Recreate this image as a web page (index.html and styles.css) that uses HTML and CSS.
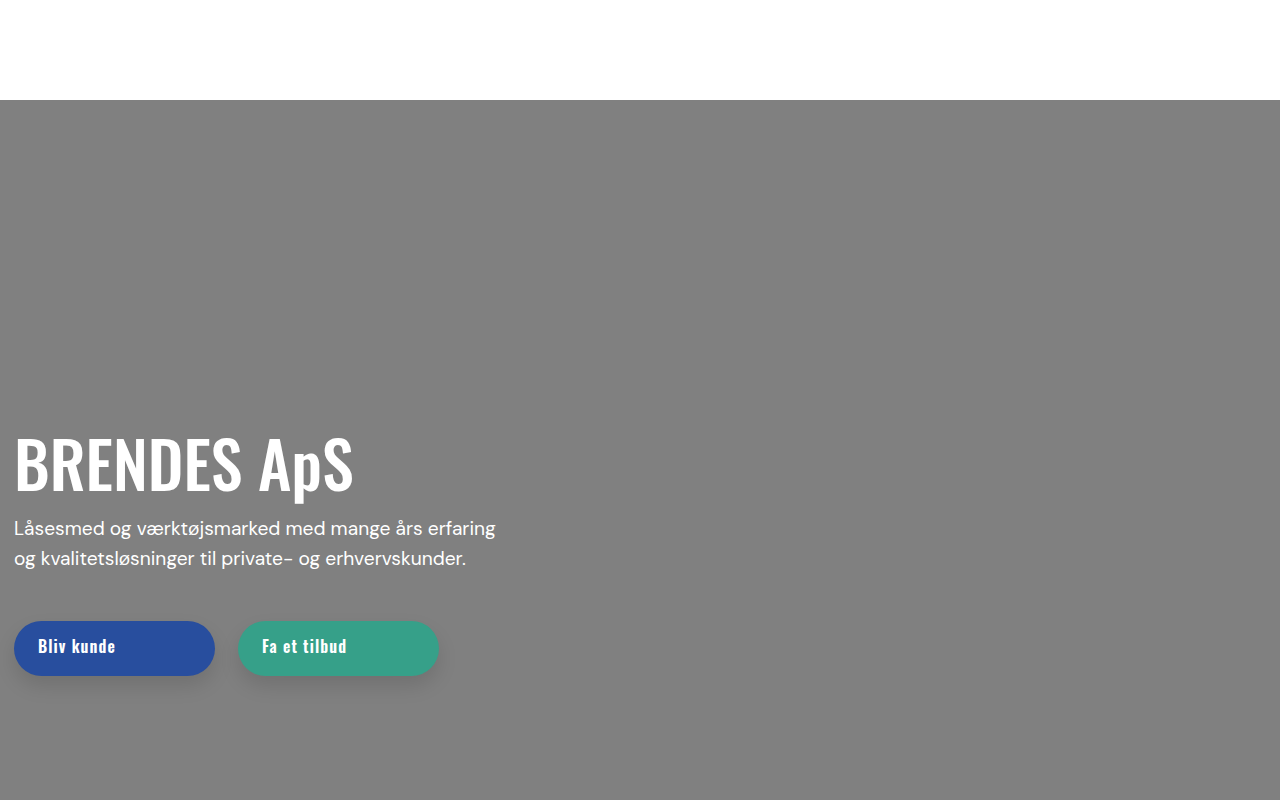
FILE: index.html
```html
<!DOCTYPE html>
<html lang="da">
<head>
    <meta charset="UTF-8">
    <meta name="viewport" content="width=device-width, initial-scale=1.0">
    <title>BRENDES ApS</title>
    <link rel="stylesheet" href="styles.css">
</head>
<body>
    <!-- Top bar -->
    <header class="site-header"></header>

    <!-- Hero -->
    <section class="hero">
        <div class="hero-content">
            <h1 class="hero-title">BRENDES ApS</h1>
            <p class="hero-text">Låsesmed og værktøjsmarked med mange års erfaring og kvalitetsløsninger til private- og erhvervskunder.</p>
            <div class="hero-buttons">
                <a href="#" class="btn btn-blue">Bliv kunde</a>
                <a href="#" class="btn btn-green">Fa et tilbud</a>
            </div>
        </div>
    </section>
</body>
</html>
```

FILE: styles.css
```css
body {
    margin: 0;
    font-family: "DM Sans", Inter, "Liberation Sans", sans-serif;
    background-color: #fff;
}
.site-header {
    height: 100px;
    background: #fff;
}
.hero {
    height: 700px;
    background-color: #808080;
    color: #fff;
}
.hero-content {
    padding: 322px 14px 0;
    width: 500px;
}
.hero-title {
    margin: 0 0 12px;
    font-family: Oswald, "Liberation Sans Narrow", sans-serif;
    font-weight: 500;
    font-size: 64px;
    line-height: 80px;
}
.hero-text {
    margin: 0;
    font-size: 19.2px;
    line-height: 30px;
    max-width: 490px;
}
.hero-buttons {
    display: flex;
    gap: 23px;
    margin-top: 47px;
}
.btn {
    display: block;
    width: 153px;
    padding: 0 24px;
    height: 55px;
    line-height: 50px;
    border-radius: 28px;
    color: #fff;
    text-decoration: none;
    font-family: Oswald, "Liberation Sans Narrow", sans-serif;
    font-weight: 600;
    font-size: 16px;
    letter-spacing: 1.1px;
    box-shadow: 0 10px 20px rgba(0, 0, 0, 0.12);
}
.btn-blue {
    background-color: #284e9e;
}
.btn-green {
    background-color: #36a089;
}
```
